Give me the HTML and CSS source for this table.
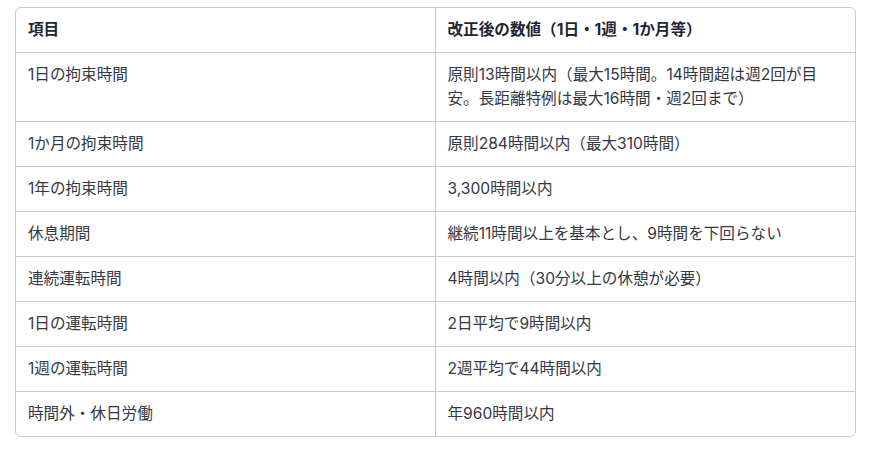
FILE: index.html
```html
<!DOCTYPE html>
<html lang="ja">
<head>
<meta charset="utf-8">
<link rel="stylesheet" href="styles.css">
</head>
<body>
<div class="table-wrap">
<table class="data-table">
<thead>
<tr><th>項目</th><th>改正後の数値（1日・1週・1か月等）</th></tr>
</thead>
<tbody>
<tr><td>1日の拘束時間</td><td>原則13時間以内（最大15時間。14時間超は週2回が目安。長距離特例は最大16時間・週2回まで）</td></tr>
<tr><td>1か月の拘束時間</td><td>原則284時間以内（最大310時間）</td></tr>
<tr><td>1年の拘束時間</td><td>3,300時間以内</td></tr>
<tr><td>休息期間</td><td>継続11時間以上を基本とし、9時間を下回らない</td></tr>
<tr><td>連続運転時間</td><td>4時間以内（30分以上の休憩が必要）</td></tr>
<tr><td>1日の運転時間</td><td>2日平均で9時間以内</td></tr>
<tr><td>1週の運転時間</td><td>2週平均で44時間以内</td></tr>
<tr><td>時間外・休日労働</td><td>年960時間以内</td></tr>
</tbody>
</table>
</div>
</body>
</html>
```
FILE: styles.css
```css
html, body {
  margin: 0;
  background: #ffffff;
}
body {
  padding: 7px 15px;
  font-family: "Inter", "Noto Sans CJK JP", sans-serif;
  font-size: 15.6px;
  line-height: 24px;
  color: #333844;
}
.table-wrap {
  border: 1px solid #c3ccd6;
  border-radius: 6px;
  overflow: hidden;
}
.data-table {
  width: 100%;
  border-collapse: separate;
  border-spacing: 0;
  table-layout: fixed;
}
.data-table th,
.data-table td {
  padding: 10px 12px;
  text-align: left;
  vertical-align: top;
  border-bottom: 1px solid #c3ccd6;
  border-right: 1px solid #c3ccd6;
}
.data-table th:last-child,
.data-table td:last-child {
  border-right: none;
}
.data-table tbody tr:last-child td {
  border-bottom: none;
}
.data-table th {
  font-weight: 700;
  color: #1e2533;
}
```
